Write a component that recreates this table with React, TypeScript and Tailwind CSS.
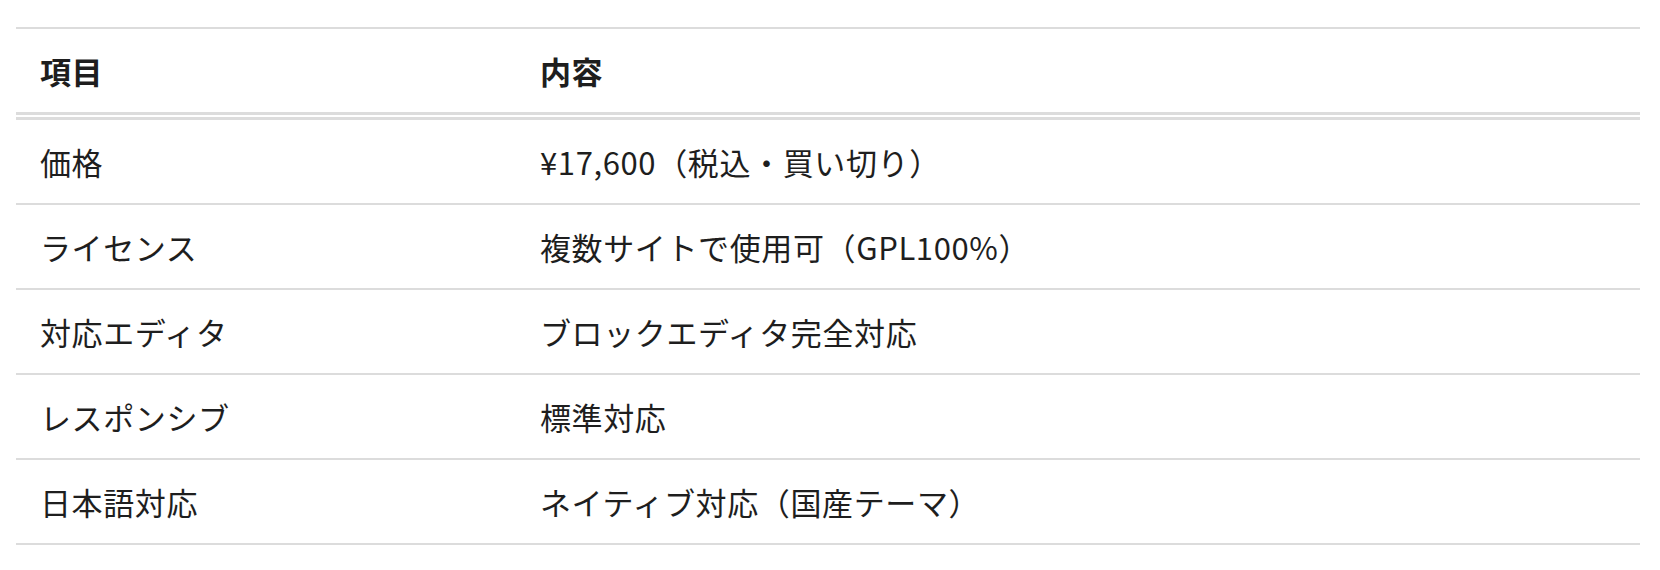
import React from "react";

const rows: [string, string][] = [
  ["価格", "¥17,600（税込・買い切り）"],
  ["ライセンス", "複数サイトで使用可（GPL100%）"],
  ["対応エディタ", "ブロックエディタ完全対応"],
  ["レスポンシブ", "標準対応"],
  ["日本語対応", "ネイティブ対応（国産テーマ）"],
];

export default function App() {
  return (
    <div
      className="w-[1660px] h-[570px] bg-white pt-[27px] pl-4 pr-5"
      style={{ fontFamily: '"Noto Sans CJK JP", "Noto Sans", sans-serif' }}
    >
      <table className="w-full border-collapse border-t-2 border-[#dcdcdc] text-[31px] leading-[51px] tracking-[0.02em] text-[#1e1e1e]">
        <thead>
          <tr className="border-b-[8px] border-double border-[#dcdcdc]">
            <th className="w-[500px] px-6 py-4 text-left font-bold">項目</th>
            <th className="px-6 py-4 text-left font-bold">内容</th>
          </tr>
        </thead>
        <tbody>
          {rows.map(([a, b]) => (
            <tr key={a} className="border-b-2 border-[#dcdcdc]">
              <td className="px-6 py-4 font-normal">{a}</td>
              <td className="px-6 py-4 font-normal">{b}</td>
            </tr>
          ))}
        </tbody>
      </table>
    </div>
  );
}
